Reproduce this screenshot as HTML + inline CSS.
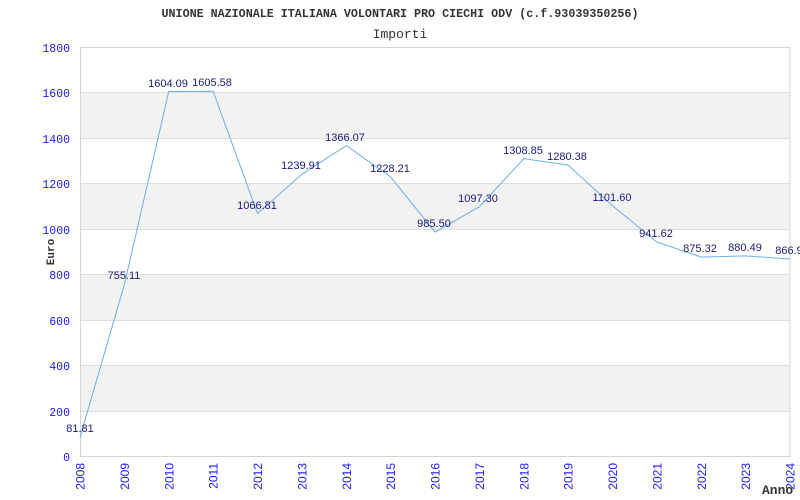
<!DOCTYPE html>
<html><head><meta charset="utf-8"><style>
html,body{margin:0;padding:0;background:#fff;width:800px;height:500px;overflow:hidden}
.s{font-family:"Liberation Sans",Arial,sans-serif}
.m{font-family:"Liberation Mono",monospace}
</style></head><body>
<svg width="800" height="500" xmlns="http://www.w3.org/2000/svg">
<text class="m" x="400" y="17" text-anchor="middle" font-weight="bold" font-size="11.7" fill="#333">UNIONE NAZIONALE ITALIANA VOLONTARI PRO CIECHI ODV (c.f.93039350256)</text>
<text class="m" x="400" y="38" text-anchor="middle" font-size="13" fill="#333">Importi</text>
<g fill="#f2f2f2">
<rect x="80" y="92" width="710" height="46"/>
<rect x="80" y="183" width="710" height="46"/>
<rect x="80" y="274" width="710" height="46"/>
<rect x="80" y="365" width="710" height="46"/>
</g>
<g stroke="#dcdcdc" stroke-width="1">
<line x1="80" y1="92.5" x2="790" y2="92.5"/>
<line x1="80" y1="138.5" x2="790" y2="138.5"/>
<line x1="80" y1="183.5" x2="790" y2="183.5"/>
<line x1="80" y1="229.5" x2="790" y2="229.5"/>
<line x1="80" y1="274.5" x2="790" y2="274.5"/>
<line x1="80" y1="320.5" x2="790" y2="320.5"/>
<line x1="80" y1="365.5" x2="790" y2="365.5"/>
<line x1="80" y1="411.5" x2="790" y2="411.5"/>
</g>
<rect x="80.5" y="47.5" width="709.5" height="409" fill="none" stroke="#d4d4d4"/>
<g class="m" font-size="11.5" fill="#1a1aff" text-anchor="end">
<text x="70" y="52">1800</text><text x="70" y="97">1600</text><text x="70" y="143">1400</text>
<text x="70" y="188">1200</text><text x="70" y="234">1000</text><text x="70" y="279">800</text>
<text x="70" y="325">600</text><text x="70" y="370">400</text><text x="70" y="416">200</text>
<text x="70" y="461">0</text>
</g>
<text class="m" transform="translate(54,252) rotate(-90)" text-anchor="middle" font-weight="bold" font-size="11" fill="#333">Euro</text>
<polyline fill="none" stroke="#6aaef0" stroke-width="1" points="80,437.4 124.4,284.4 168.75,91.5 213.1,91.2 257.5,213.6 301.9,174.3 346.25,145.6 390.6,176.9 435,232.1 479.4,206.7 523.75,158.6 568.1,165.1 612.5,205.7 656.9,242 701.25,257.1 745.6,255.9 790,259"/>
<g class="s" font-size="11" fill="#1a1a80" text-anchor="middle">
<text x="80" y="432">81.81</text><text x="124" y="279">755.11</text><text x="168" y="87">1604.09</text>
<text x="212" y="86">1605.58</text><text x="257" y="209">1066.81</text><text x="301" y="169">1239.91</text>
<text x="345" y="141">1366.07</text><text x="390" y="172">1228.21</text><text x="434" y="227">985.50</text>
<text x="478" y="202">1097.30</text><text x="523" y="154">1308.85</text><text x="567" y="160">1280.38</text>
<text x="612" y="201">1101.60</text><text x="656" y="237">941.62</text><text x="700" y="252">875.32</text>
<text x="745" y="251">880.49</text><text x="789" y="254">866.9</text>
</g>
<g class="s" font-size="12" fill="#1a1aff" text-anchor="end">
<text transform="translate(84.5,463) rotate(-90)">2008</text>
<text transform="translate(128.9,463) rotate(-90)">2009</text>
<text transform="translate(173.25,463) rotate(-90)">2010</text>
<text transform="translate(217.6,463) rotate(-90)">2011</text>
<text transform="translate(262,463) rotate(-90)">2012</text>
<text transform="translate(306.4,463) rotate(-90)">2013</text>
<text transform="translate(350.75,463) rotate(-90)">2014</text>
<text transform="translate(395.1,463) rotate(-90)">2015</text>
<text transform="translate(439.5,463) rotate(-90)">2016</text>
<text transform="translate(483.9,463) rotate(-90)">2017</text>
<text transform="translate(528.25,463) rotate(-90)">2018</text>
<text transform="translate(572.6,463) rotate(-90)">2019</text>
<text transform="translate(617,463) rotate(-90)">2020</text>
<text transform="translate(661.4,463) rotate(-90)">2021</text>
<text transform="translate(705.75,463) rotate(-90)">2022</text>
<text transform="translate(750.1,463) rotate(-90)">2023</text>
<text transform="translate(794.5,463) rotate(-90)">2024</text>
</g>
<text class="m" x="762" y="494" font-weight="bold" font-size="13" fill="#333">Anno</text>
</svg>
</body></html>
